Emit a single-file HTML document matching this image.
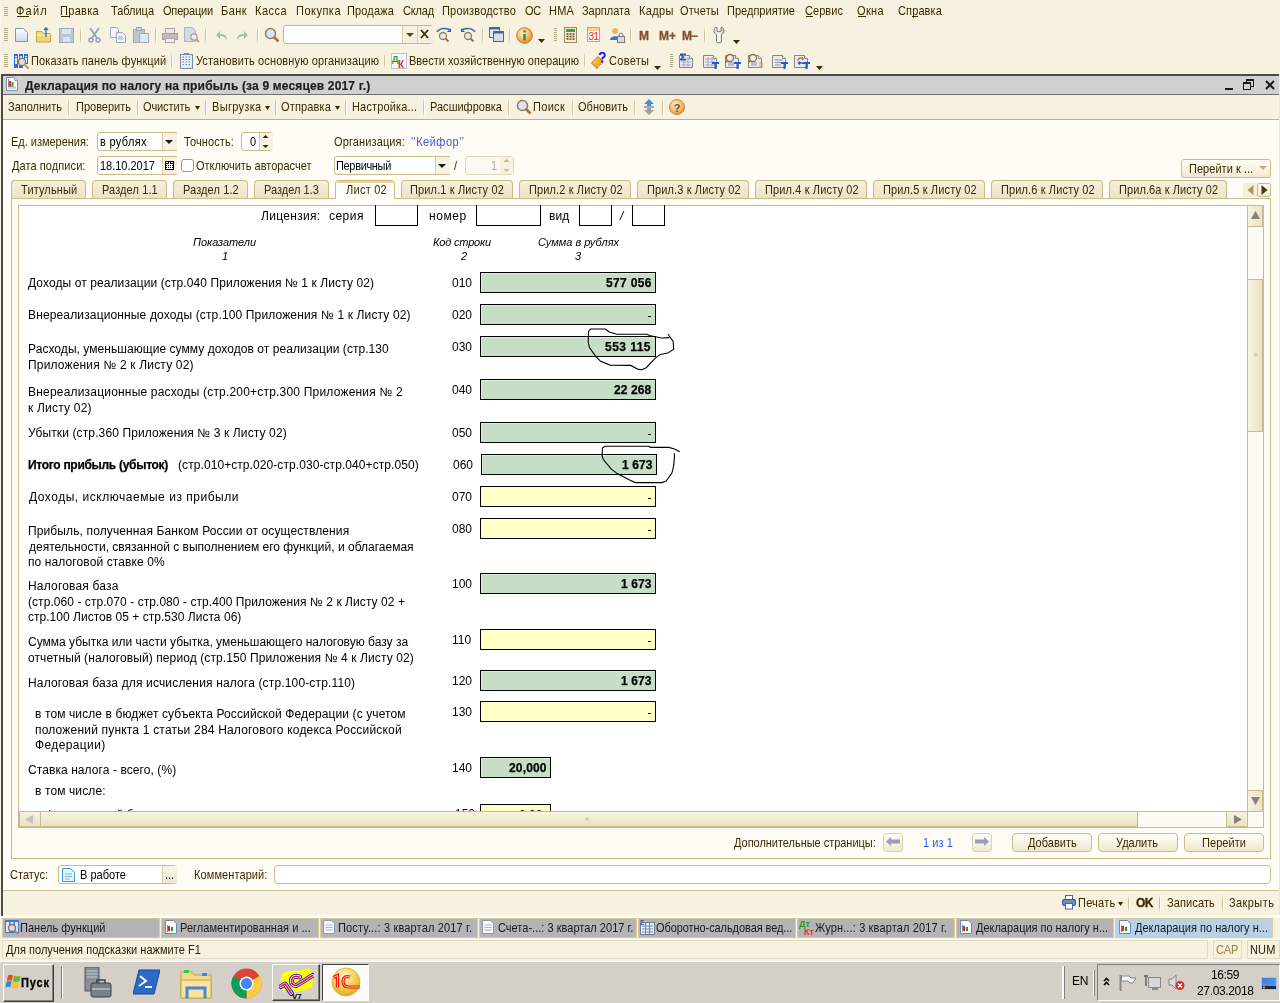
<!DOCTYPE html>
<html><head><meta charset="utf-8"><style>
html,body{margin:0;padding:0;width:1280px;height:1003px;overflow:hidden;background:#f7f2df}
body{position:relative;font-family:"Liberation Sans",sans-serif;color:#3a2b00}
.r{position:absolute;display:block}
.t{position:absolute;white-space:nowrap;will-change:transform}
</style></head><body>
<div class="r" style="left:0px;top:0px;width:1280px;height:74px;background:#f7f2df"></div>
<div class="r" style="left:0px;top:0px;width:1px;height:74px;background:#fbf8ee"></div>
<div class="r" style="left:4px;top:7px;width:4px;height:1px;background:#b3ab88"></div>
<div class="r" style="left:4px;top:9px;width:4px;height:1px;background:#b3ab88"></div>
<div class="r" style="left:4px;top:11px;width:4px;height:1px;background:#b3ab88"></div>
<div class="r" style="left:4px;top:13px;width:4px;height:1px;background:#b3ab88"></div>
<div class="r" style="left:4px;top:15px;width:4px;height:1px;background:#b3ab88"></div>
<div class="t" style="left:16.00px;top:6px;font-size:11px;line-height:11px;letter-spacing:1.206px;transform:scaleY(1.125);transform-origin:0 9px;">Файл</div>
<div class="t" style="left:60.00px;top:6px;font-size:11px;line-height:11px;letter-spacing:0.307px;transform:scaleY(1.125);transform-origin:0 9px;">Правка</div>
<div class="t" style="left:111.00px;top:6px;font-size:11px;line-height:11px;letter-spacing:-0.019px;transform:scaleY(1.125);transform-origin:0 9px;">Таблица</div>
<div class="t" style="left:163.00px;top:6px;font-size:11px;line-height:11px;letter-spacing:-0.182px;transform:scaleY(1.125);transform-origin:0 9px;">Операции</div>
<div class="t" style="left:221.00px;top:6px;font-size:11px;line-height:11px;letter-spacing:0.444px;transform:scaleY(1.125);transform-origin:0 9px;">Банк</div>
<div class="t" style="left:255.00px;top:6px;font-size:11px;line-height:11px;letter-spacing:0.472px;transform:scaleY(1.125);transform-origin:0 9px;">Касса</div>
<div class="t" style="left:296.00px;top:6px;font-size:11px;line-height:11px;letter-spacing:0.487px;transform:scaleY(1.125);transform-origin:0 9px;">Покупка</div>
<div class="t" style="left:347.00px;top:6px;font-size:11px;line-height:11px;letter-spacing:0.156px;transform:scaleY(1.125);transform-origin:0 9px;">Продажа</div>
<div class="t" style="left:403.00px;top:6px;font-size:11px;line-height:11px;letter-spacing:-0.167px;transform:scaleY(1.125);transform-origin:0 9px;">Склад</div>
<div class="t" style="left:442.00px;top:6px;font-size:11px;line-height:11px;letter-spacing:0.190px;transform:scaleY(1.125);transform-origin:0 9px;">Производство</div>
<div class="t" style="left:524.50px;top:6px;font-size:11px;line-height:11px;letter-spacing:-0.250px;transform:scaleY(1.125);transform-origin:0 9px;">ОС</div>
<div class="t" style="left:548.50px;top:6px;font-size:11px;line-height:11px;letter-spacing:0.185px;transform:scaleY(1.125);transform-origin:0 9px;">НМА</div>
<div class="t" style="left:582.00px;top:6px;font-size:11px;line-height:11px;letter-spacing:-0.020px;transform:scaleY(1.125);transform-origin:0 9px;">Зарплата</div>
<div class="t" style="left:639.00px;top:6px;font-size:11px;line-height:11px;letter-spacing:0.382px;transform:scaleY(1.125);transform-origin:0 9px;">Кадры</div>
<div class="t" style="left:680.00px;top:6px;font-size:11px;line-height:11px;letter-spacing:0.137px;transform:scaleY(1.125);transform-origin:0 9px;">Отчеты</div>
<div class="t" style="left:726.50px;top:6px;font-size:11px;line-height:11px;letter-spacing:0.019px;transform:scaleY(1.125);transform-origin:0 9px;">Предприятие</div>
<div class="t" style="left:805.00px;top:6px;font-size:11px;line-height:11px;letter-spacing:0.056px;transform:scaleY(1.125);transform-origin:0 9px;">Сервис</div>
<div class="t" style="left:857.00px;top:6px;font-size:11px;line-height:11px;letter-spacing:0.360px;transform:scaleY(1.125);transform-origin:0 9px;">Окна</div>
<div class="t" style="left:898.00px;top:6px;font-size:11px;line-height:11px;letter-spacing:0.121px;transform:scaleY(1.125);transform-origin:0 9px;">Справка</div>
<div class="r" style="left:17px;top:16px;width:12px;height:1px;background:#3a2b00"></div>
<div class="r" style="left:61px;top:16px;width:8px;height:1px;background:#3a2b00"></div>
<div class="r" style="left:806px;top:16px;width:7px;height:1px;background:#3a2b00"></div>
<div class="r" style="left:858px;top:16px;width:8px;height:1px;background:#3a2b00"></div>
<div class="r" style="left:912px;top:16px;width:6px;height:1px;background:#3a2b00"></div>
<div class="r" style="left:4px;top:28px;width:4px;height:1px;background:#b3ab88"></div>
<div class="r" style="left:4px;top:30px;width:4px;height:1px;background:#b3ab88"></div>
<div class="r" style="left:4px;top:32px;width:4px;height:1px;background:#b3ab88"></div>
<div class="r" style="left:4px;top:34px;width:4px;height:1px;background:#b3ab88"></div>
<div class="r" style="left:4px;top:36px;width:4px;height:1px;background:#b3ab88"></div>
<div class="r" style="left:4px;top:38px;width:4px;height:1px;background:#b3ab88"></div>
<div class="r" style="left:4px;top:40px;width:4px;height:1px;background:#b3ab88"></div>
<svg class="r" style="left:15px;top:28px;" width="13" height="14" viewBox="0 0 13 14"><defs><linearGradient id="gd" x1="0" y1="0" x2="0" y2="1"><stop offset="0" stop-color="#fff"/><stop offset="1" stop-color="#c9d9f0"/></linearGradient></defs><path d="M0.5 0.5H8.5L12.5 4.5V13.5H0.5Z" fill="url(#gd)" stroke="#7d93b0"/></svg>
<svg class="r" style="left:36px;top:27px;" width="16" height="16" viewBox="0 0 16 16"><path d="M0.5 4.5H6L7.5 6.5H14.5V15H0.5Z" fill="#f2d77a" stroke="#c9a24a"/><path d="M0.5 8H14.5" stroke="#fff3c0"/><path d="M10 1V10M8 3L10 1L12 3" stroke="#3a6a98" fill="none" stroke-width="1.3"/></svg>
<svg class="r" style="left:59px;top:28px;" width="15" height="15" viewBox="0 0 15 15"><rect x="0.5" y="0.5" width="14" height="14" fill="#b9c7d8" stroke="#9aabbf"/><rect x="3" y="1" width="9" height="5" fill="#dde6ef"/><rect x="4" y="9" width="7" height="5" fill="#dde6ef"/></svg>
<div class="r" style="left:80px;top:27px;width:1px;height:17px;background:linear-gradient(to bottom, rgba(205,191,152,0), #cdbf98 30%, #cdbf98 70%, rgba(205,191,152,0))"></div>
<div class="r" style="left:81px;top:27px;width:1px;height:17px;background:linear-gradient(to bottom, rgba(255,255,255,0), #fff 30%, #fff 70%, rgba(255,255,255,0))"></div>
<svg class="r" style="left:88px;top:27px;" width="13" height="16" viewBox="0 0 13 16"><path d="M2 1L9 11M11 1L4 11" stroke="#8fa2ba" stroke-width="1.8"/><circle cx="3" cy="13" r="2" fill="none" stroke="#8fa2ba" stroke-width="1.5"/><circle cx="10" cy="13" r="2" fill="none" stroke="#8fa2ba" stroke-width="1.5"/></svg>
<svg class="r" style="left:110px;top:27px;" width="16" height="16" viewBox="0 0 16 16"><path d="M0.5 0.5H6.5L8.5 2.5V10.5H0.5Z" fill="#f2f5fa" stroke="#9aabbf"/><path d="M6.5 5.5H12.5L15.5 8.5V15.5H6.5Z" fill="#f2f5fa" stroke="#9aabbf"/><path d="M8 10H13M8 12H13" stroke="#9aabbf"/></svg>
<svg class="r" style="left:133px;top:27px;" width="16" height="16" viewBox="0 0 16 16"><rect x="0.5" y="2.5" width="11" height="13" fill="#b8c6d6" stroke="#9aabbf"/><rect x="3.5" y="0.5" width="5" height="3" fill="#ccd6e2" stroke="#9aabbf"/><rect x="6.5" y="6.5" width="9" height="9" fill="#dfe6ee" stroke="#9aabbf"/></svg>
<div class="r" style="left:155px;top:27px;width:1px;height:17px;background:linear-gradient(to bottom, rgba(205,191,152,0), #cdbf98 30%, #cdbf98 70%, rgba(205,191,152,0))"></div>
<div class="r" style="left:156px;top:27px;width:1px;height:17px;background:linear-gradient(to bottom, rgba(255,255,255,0), #fff 30%, #fff 70%, rgba(255,255,255,0))"></div>
<svg class="r" style="left:162px;top:28px;" width="16" height="15" viewBox="0 0 16 15"><rect x="3.5" y="0.5" width="9" height="5" fill="#e8e8e8" stroke="#b0a8a8"/><rect x="0.5" y="5.5" width="15" height="6" fill="#c4b8b8" stroke="#aa9e9e"/><rect x="3.5" y="10.5" width="9" height="4" fill="#eee" stroke="#b0a8a8"/></svg>
<svg class="r" style="left:184px;top:27px;" width="16" height="16" viewBox="0 0 16 16"><path d="M0.5 0.5H8.5L11.5 3.5V14.5H0.5Z" fill="#d2dbe6" stroke="#a8b6c6"/><circle cx="10" cy="10" r="3.2" fill="#e6eef6" stroke="#b89a90" stroke-width="1.3"/><path d="M12.3 12.3L15 15" stroke="#b89a90" stroke-width="1.8"/></svg>
<div class="r" style="left:205px;top:27px;width:1px;height:17px;background:linear-gradient(to bottom, rgba(205,191,152,0), #cdbf98 30%, #cdbf98 70%, rgba(205,191,152,0))"></div>
<div class="r" style="left:206px;top:27px;width:1px;height:17px;background:linear-gradient(to bottom, rgba(255,255,255,0), #fff 30%, #fff 70%, rgba(255,255,255,0))"></div>
<svg class="r" style="left:216px;top:30px;" width="12" height="11" viewBox="0 0 12 11"><path d="M11 10C11 5 8 4 4 4V1L0 5L4 9V6C7 6 9 7 11 10Z" fill="#a8baa8"/></svg>
<svg class="r" style="left:236px;top:30px;" width="12" height="11" viewBox="0 0 12 11"><path d="M1 10C1 5 4 4 8 4V1L12 5L8 9V6C5 6 3 7 1 10Z" fill="#a8baa8"/></svg>
<div class="r" style="left:257px;top:27px;width:1px;height:17px;background:linear-gradient(to bottom, rgba(205,191,152,0), #cdbf98 30%, #cdbf98 70%, rgba(205,191,152,0))"></div>
<div class="r" style="left:258px;top:27px;width:1px;height:17px;background:linear-gradient(to bottom, rgba(255,255,255,0), #fff 30%, #fff 70%, rgba(255,255,255,0))"></div>
<svg class="r" style="left:264px;top:27px;" width="16" height="16" viewBox="0 0 16 16"><circle cx="6.5" cy="6.5" r="5" fill="#d9e8f8" stroke="#9a7a5a" stroke-width="1.5"/><path d="M10 10L14.5 14.5" stroke="#b56a3a" stroke-width="2.5"/></svg>
<div class="r" style="left:283px;top:25px;width:150px;height:19px;background:#fff;border:1px solid #c5b98f;border-radius:3px;box-sizing:border-box"></div>
<div class="r" style="left:402px;top:26px;width:15px;height:17px;background:#f5f0de;border-left:1px solid #d8ceaa"></div>
<div class="r" style="left:417px;top:26px;width:15px;height:17px;background:#f5f0de;border-left:1px solid #d8ceaa;border-radius:0 2px 2px 0"></div>
<svg class="r" style="left:406px;top:33px;" width="8" height="4" viewBox="0 0 8 4"><path d="M0 0H8L4.0 4Z" fill="#5a4a1a"/></svg>
<svg class="r" style="left:420px;top:29px;" width="9" height="10" viewBox="0 0 9 10"><path d="M1 1L8 9M8 1L1 9" stroke="#3a2b00" stroke-width="1.8"/></svg>
<svg class="r" style="left:436px;top:27px;" width="16" height="16" viewBox="0 0 16 16"><path d="M1 5C3 1 12 0 15 4" stroke="#3a6aa8" stroke-width="1.5" fill="none"/><path d="M15 1V5H11" fill="#3a6aa8"/><circle cx="7" cy="9" r="3.5" fill="#dde9f6" stroke="#9a7a5a" stroke-width="1.3"/><path d="M9.5 11.5L12.5 14.5" stroke="#b56a3a" stroke-width="2"/></svg>
<svg class="r" style="left:460px;top:27px;" width="16" height="16" viewBox="0 0 16 16"><path d="M1 4C4 0 13 1 15 5" stroke="#3a6aa8" stroke-width="1.5" fill="none"/><path d="M1 1V5H5" fill="#3a6aa8"/><circle cx="8" cy="9" r="3.5" fill="#dde9f6" stroke="#9a7a5a" stroke-width="1.3"/><path d="M10.5 11.5L13.5 14.5" stroke="#b56a3a" stroke-width="2"/></svg>
<div class="r" style="left:482px;top:27px;width:1px;height:17px;background:linear-gradient(to bottom, rgba(205,191,152,0), #cdbf98 30%, #cdbf98 70%, rgba(205,191,152,0))"></div>
<div class="r" style="left:483px;top:27px;width:1px;height:17px;background:linear-gradient(to bottom, rgba(255,255,255,0), #fff 30%, #fff 70%, rgba(255,255,255,0))"></div>
<svg class="r" style="left:489px;top:27px;" width="15" height="16" viewBox="0 0 15 16"><rect x="0.5" y="0.5" width="10" height="10" fill="#e4ecf6" stroke="#4a6a90"/><rect x="0.5" y="0.5" width="10" height="2" fill="#4a6a90"/><rect x="4.5" y="4.5" width="10" height="10" fill="#d4e0ee" stroke="#4a6a90"/><rect x="4.5" y="4.5" width="10" height="2" fill="#4a6a90"/></svg>
<div class="r" style="left:509px;top:27px;width:1px;height:17px;background:linear-gradient(to bottom, rgba(205,191,152,0), #cdbf98 30%, #cdbf98 70%, rgba(205,191,152,0))"></div>
<div class="r" style="left:510px;top:27px;width:1px;height:17px;background:linear-gradient(to bottom, rgba(255,255,255,0), #fff 30%, #fff 70%, rgba(255,255,255,0))"></div>
<svg class="r" style="left:516px;top:27px;" width="17" height="17" viewBox="0 0 17 17"><defs><radialGradient id="gi" cx="0.4" cy="0.35" r="0.7"><stop offset="0" stop-color="#fff4d8"/><stop offset="0.6" stop-color="#f5b45a"/><stop offset="1" stop-color="#d98a2a"/></radialGradient></defs><circle cx="8.5" cy="8.5" r="7.8" fill="url(#gi)" stroke="#c07a30"/><rect x="7.3" y="7" width="2.4" height="6.5" fill="#3d8a2a"/><circle cx="8.5" cy="4.5" r="1.3" fill="#3d8a2a"/></svg>
<svg class="r" style="left:538px;top:39px;" width="7" height="4" viewBox="0 0 7 4"><path d="M0 0H7L3.5 4Z" fill="#3a2b00"/></svg>
<div class="r" style="left:554px;top:28px;width:3px;height:1px;background:#b3ab88"></div>
<div class="r" style="left:554px;top:30px;width:3px;height:1px;background:#b3ab88"></div>
<div class="r" style="left:554px;top:32px;width:3px;height:1px;background:#b3ab88"></div>
<div class="r" style="left:554px;top:34px;width:3px;height:1px;background:#b3ab88"></div>
<div class="r" style="left:554px;top:36px;width:3px;height:1px;background:#b3ab88"></div>
<div class="r" style="left:554px;top:38px;width:3px;height:1px;background:#b3ab88"></div>
<div class="r" style="left:554px;top:40px;width:3px;height:1px;background:#b3ab88"></div>
<svg class="r" style="left:564px;top:27px;" width="13" height="16" viewBox="0 0 13 16"><rect x="0.5" y="0.5" width="12" height="15" fill="#f4ead0" stroke="#a08a60"/><rect x="2" y="2" width="9" height="3" fill="#4a9a4a"/><path d="M2.5 7H4.5M5.5 7H7.5M8.5 7H10.5M2.5 9.5H4.5M5.5 9.5H7.5M8.5 9.5H10.5M2.5 12H4.5M5.5 12H7.5M8.5 12H10.5" stroke="#5a4a30" stroke-width="1.4"/></svg>
<svg class="r" style="left:587px;top:27px;" width="13" height="15" viewBox="0 0 13 15"><rect x="0.5" y="0.5" width="12" height="14" fill="#fdf8f0" stroke="#a8a8b0"/><rect x="1" y="1" width="11" height="3" fill="#f6c890"/><path d="M2.5 2H3.5M5 2H6M7.5 2H8.5M10 2H11" stroke="#fff"/><text x="6.5" y="13" font-size="10" text-anchor="middle" fill="#e8281c" font-family="Liberation Sans" letter-spacing="-0.5">31</text></svg>
<svg class="r" style="left:610px;top:27px;" width="15" height="16" viewBox="0 0 15 16"><circle cx="5" cy="4" r="3" fill="#f2b060"/><path d="M0 13C0 8 10 8 10 13Z" fill="#3a78c8"/><rect x="7.5" y="9.5" width="7" height="6" fill="#d8d8d8" stroke="#7a7a7a"/><path d="M9 9.5V8A2 2 0 0 1 13 8V9.5" stroke="#7a7a7a" fill="none"/></svg>
<div class="r" style="left:630px;top:27px;width:1px;height:17px;background:linear-gradient(to bottom, rgba(205,191,152,0), #cdbf98 30%, #cdbf98 70%, rgba(205,191,152,0))"></div>
<div class="r" style="left:631px;top:27px;width:1px;height:17px;background:linear-gradient(to bottom, rgba(255,255,255,0), #fff 30%, #fff 70%, rgba(255,255,255,0))"></div>
<div class="t" style="left:639.00px;top:30px;font-size:12px;line-height:12px;font-weight:bold;color:#80502a;-webkit-text-stroke:0.3px #80502a;">M</div>
<div class="t" style="left:659.00px;top:30px;font-size:12px;line-height:12px;font-weight:bold;color:#80502a;letter-spacing:-0.002px;-webkit-text-stroke:0.3px #80502a;">M+</div>
<div class="t" style="left:682.00px;top:30px;font-size:12px;line-height:12px;font-weight:bold;color:#80502a;letter-spacing:-1.202px;-webkit-text-stroke:0.3px #80502a;">M−</div>
<div class="r" style="left:704px;top:27px;width:1px;height:17px;background:linear-gradient(to bottom, rgba(205,191,152,0), #cdbf98 30%, #cdbf98 70%, rgba(205,191,152,0))"></div>
<div class="r" style="left:705px;top:27px;width:1px;height:17px;background:linear-gradient(to bottom, rgba(255,255,255,0), #fff 30%, #fff 70%, rgba(255,255,255,0))"></div>
<svg class="r" style="left:713px;top:26px;" width="12" height="18" viewBox="0 0 12 18"><defs><linearGradient id="gw" x1="0" y1="0" x2="1" y2="0"><stop offset="0" stop-color="#d8d8d8"/><stop offset="0.5" stop-color="#fafafa"/><stop offset="1" stop-color="#b8b8b8"/></linearGradient></defs><path d="M2.5 1.5C0.5 3 0.5 6.5 2.5 8L3.5 8.8V15.5Q3.5 16.8 6 16.8Q8.5 16.8 8.5 15.5V8.8L9.5 8C11.5 6.5 11.5 3 9.5 1.5L8 1.5V5.2Q6 6.5 4 5.2V1.5Z" fill="url(#gw)" stroke="#7a7a7a"/></svg>
<svg class="r" style="left:733px;top:40px;" width="7" height="4" viewBox="0 0 7 4"><path d="M0 0H7L3.5 4Z" fill="#3a2a00"/></svg>
<div class="r" style="left:4px;top:54px;width:4px;height:1px;background:#b3ab88"></div>
<div class="r" style="left:4px;top:56px;width:4px;height:1px;background:#b3ab88"></div>
<div class="r" style="left:4px;top:58px;width:4px;height:1px;background:#b3ab88"></div>
<div class="r" style="left:4px;top:60px;width:4px;height:1px;background:#b3ab88"></div>
<div class="r" style="left:4px;top:62px;width:4px;height:1px;background:#b3ab88"></div>
<div class="r" style="left:4px;top:64px;width:4px;height:1px;background:#b3ab88"></div>
<div class="r" style="left:4px;top:66px;width:4px;height:1px;background:#b3ab88"></div>
<svg class="r" style="left:14px;top:54px;" width="16" height="16" viewBox="0 0 16 16"><rect x="0" y="0" width="4" height="14" fill="#2a6ae8"/><rect x="1" y="2" width="2" height="8" fill="#d8f0ff"/><rect x="1" y="3" width="2" height="1" fill="#e07040"/><rect x="5" y="0" width="4" height="14" fill="#2a6ae8"/><rect x="6" y="2" width="2" height="10" fill="#d8f0ff"/><rect x="10" y="0" width="4" height="10" fill="#2a6ae8"/><rect x="11" y="2" width="2" height="7" fill="#d8f0ff"/><rect x="11" y="3" width="2" height="1" fill="#e07040"/><circle cx="8" cy="8" r="3.6" fill="#c8e4fa" stroke="#b07020" stroke-width="1.3"/><path d="M10.6 10.6L14.5 14.5" stroke="#e88a30" stroke-width="2"/></svg>
<div class="t" style="left:30.50px;top:56px;font-size:11px;line-height:11px;letter-spacing:0.105px;transform:scaleY(1.125);transform-origin:0 9px;">Показать панель функций</div>
<div class="r" style="left:171px;top:53px;width:1px;height:16px;background:linear-gradient(to bottom, rgba(205,191,152,0), #cdbf98 30%, #cdbf98 70%, rgba(205,191,152,0))"></div>
<div class="r" style="left:172px;top:53px;width:1px;height:16px;background:linear-gradient(to bottom, rgba(255,255,255,0), #fff 30%, #fff 70%, rgba(255,255,255,0))"></div>
<svg class="r" style="left:180px;top:53px;" width="13" height="16" viewBox="0 0 13 16"><rect x="0.5" y="1.5" width="12" height="14" fill="#e8eef8" stroke="#7a8aa8"/><rect x="4" y="0" width="5" height="2" fill="#7a8aa8"/><path d="M2.5 4H4M5.5 4H7M8.5 4H10M2.5 6.5H4M5.5 6.5H7M8.5 6.5H10M2.5 9H4M5.5 9H7M8.5 9H10M2.5 11.5H4M5.5 11.5H7M8.5 11.5H10" stroke="#6a8ac8"/></svg>
<div class="t" style="left:195.50px;top:56px;font-size:11px;line-height:11px;letter-spacing:0.118px;transform:scaleY(1.125);transform-origin:0 9px;">Установить основную организацию</div>
<div class="r" style="left:384px;top:53px;width:1px;height:16px;background:linear-gradient(to bottom, rgba(205,191,152,0), #cdbf98 30%, #cdbf98 70%, rgba(205,191,152,0))"></div>
<div class="r" style="left:385px;top:53px;width:1px;height:16px;background:linear-gradient(to bottom, rgba(255,255,255,0), #fff 30%, #fff 70%, rgba(255,255,255,0))"></div>
<svg class="r" style="left:391px;top:53px;" width="16" height="16" viewBox="0 0 16 16"><rect x="0.5" y="0.5" width="15" height="15" fill="#f6f8fb" stroke="#b8c4d4"/><text x="1" y="9" font-size="9" font-weight="bold" fill="#2a9a2a" font-family="Liberation Sans">Д</text><text x="7" y="15" font-size="10" font-weight="bold" fill="#e03030" font-family="Liberation Sans">К</text></svg>
<div class="t" style="left:408.50px;top:56px;font-size:11px;line-height:11px;letter-spacing:0.004px;transform:scaleY(1.125);transform-origin:0 9px;">Ввести хозяйственную операцию</div>
<div class="r" style="left:584px;top:53px;width:1px;height:16px;background:linear-gradient(to bottom, rgba(205,191,152,0), #cdbf98 30%, #cdbf98 70%, rgba(205,191,152,0))"></div>
<div class="r" style="left:585px;top:53px;width:1px;height:16px;background:linear-gradient(to bottom, rgba(255,255,255,0), #fff 30%, #fff 70%, rgba(255,255,255,0))"></div>
<svg class="r" style="left:591px;top:52px;" width="18" height="17" viewBox="0 0 18 17"><defs><linearGradient id="gb" x1="0" y1="0" x2="1" y2="1"><stop offset="0" stop-color="#ffe840"/><stop offset="1" stop-color="#f07020"/></linearGradient></defs><path d="M0.5 11L7 4.5L12.5 10L6 16.5Z" fill="url(#gb)" stroke="#b04a10" stroke-width="0.8"/><path d="M7.5 15L12.5 10" stroke="#fff" stroke-width="1.2" stroke-dasharray="1 1"/><path d="M8.5 3.2Q8.8 0.8 11.2 0.8Q13.8 0.8 13.8 3.2Q13.8 4.8 12 5.6Q11.2 6 11.2 7.5" fill="none" stroke="#1a28f0" stroke-width="2"/><rect x="10.2" y="8.6" width="2" height="2" fill="#1a28f0"/></svg>
<div class="t" style="left:608.50px;top:56px;font-size:11px;line-height:11px;letter-spacing:0.310px;transform:scaleY(1.125);transform-origin:0 9px;">Советы</div>
<svg class="r" style="left:654px;top:66px;" width="7" height="4" viewBox="0 0 7 4"><path d="M0 0H7L3.5 4Z" fill="#3a2b00"/></svg>
<div class="r" style="left:670px;top:54px;width:3px;height:1px;background:#b3ab88"></div>
<div class="r" style="left:670px;top:56px;width:3px;height:1px;background:#b3ab88"></div>
<div class="r" style="left:670px;top:58px;width:3px;height:1px;background:#b3ab88"></div>
<div class="r" style="left:670px;top:60px;width:3px;height:1px;background:#b3ab88"></div>
<div class="r" style="left:670px;top:62px;width:3px;height:1px;background:#b3ab88"></div>
<div class="r" style="left:670px;top:64px;width:3px;height:1px;background:#b3ab88"></div>
<div class="r" style="left:670px;top:66px;width:3px;height:1px;background:#b3ab88"></div>
<svg class="r" style="left:679px;top:53px;" width="16" height="16" viewBox="0 0 16 16"><path d="M0.5 2.5H10.5L13.5 5.5V14.5H0.5Z" fill="#ececf0" stroke="#85858d"/><path d="M10.5 2.5V5.5H13.5" fill="#fff" stroke="#85858d"/><path d="M2 6H12M2 9H12M2 12H12M5 4V14M9 4V14" stroke="#a8a8c0"/><path d="M1 0.5H7V2H3.5L5.5 4L3.5 6H7V7.5H1V6L3 4L1 2Z" fill="#2f5fb0"/></svg>
<svg class="r" style="left:703px;top:53px;" width="16" height="16" viewBox="0 0 16 16"><path d="M0.5 2.5H10.5L13.5 5.5V14.5H0.5Z" fill="#ececf0" stroke="#85858d"/><path d="M10.5 2.5V5.5H13.5" fill="#fff" stroke="#85858d"/><path d="M2 6H12M2 9H12M2 12H12M5 4V14M9 4V14" stroke="#a8a8c0"/><path d="M9 9H16V11H13.5V16H11.5V11H9Z" fill="#1f5fbf"/></svg>
<svg class="r" style="left:725px;top:53px;" width="16" height="16" viewBox="0 0 16 16"><path d="M0.5 2.5H10.5L13.5 5.5V14.5H0.5Z" fill="#ececf0" stroke="#85858d"/><path d="M10.5 2.5V5.5H13.5" fill="#fff" stroke="#85858d"/><path d="M3 10H11M3 12H9" stroke="#909098"/><circle cx="5" cy="5" r="3.5" fill="#e8f0f8" stroke="#9a6a40" stroke-width="1.3"/><path d="M2.5 7.5L0.5 9.5" stroke="#9a6a40" stroke-width="1.6"/><path d="M9 9H16V11H13.5V16H11.5V11H9Z" fill="#1f5fbf"/></svg>
<svg class="r" style="left:748px;top:53px;" width="16" height="16" viewBox="0 0 16 16"><path d="M0.5 2.5H10.5L13.5 5.5V14.5H0.5Z" fill="#ececf0" stroke="#85858d"/><path d="M10.5 2.5V5.5H13.5" fill="#fff" stroke="#85858d"/><path d="M3 10H9M3 12H9" stroke="#909098"/><path d="M11 10H15M11 12H15M11 14H15" stroke="#c0a040" stroke-width="1.2"/><circle cx="5" cy="5" r="3.5" fill="#e8f0f8" stroke="#9a6a40" stroke-width="1.3"/><path d="M2.5 7.5L0.5 9.5" stroke="#9a6a40" stroke-width="1.6"/></svg>
<svg class="r" style="left:772px;top:53px;" width="16" height="16" viewBox="0 0 16 16"><path d="M0.5 2.5H10.5L13.5 5.5V14.5H0.5Z" fill="#ececf0" stroke="#85858d"/><path d="M10.5 2.5V5.5H13.5" fill="#fff" stroke="#85858d"/><path d="M3 7H11M3 9.5H11M3 12H9" stroke="#909098"/><path d="M9 9H16V11H13.5V16H11.5V11H9Z" fill="#1f5fbf"/></svg>
<svg class="r" style="left:794px;top:53px;" width="16" height="16" viewBox="0 0 16 16"><path d="M0.5 2.5H10.5L13.5 5.5V14.5H0.5Z" fill="#ececf0" stroke="#85858d"/><path d="M10.5 2.5V5.5H13.5" fill="#fff" stroke="#85858d"/><path d="M3 7Q5 3 8 5L8 3.5L10 6L7.5 7.5L7.8 6Q5.5 5 4 8Z" fill="#c06a30"/><path d="M4 10H9M4 10L6 8.5M4 10L6 11.5" stroke="#2060c0" stroke-width="1.3" fill="none"/><path d="M9 9H16V11H13.5V16H11.5V11H9Z" fill="#1f5fbf"/></svg>
<svg class="r" style="left:816px;top:66px;" width="7" height="4" viewBox="0 0 7 4"><path d="M0 0H7L3.5 4Z" fill="#3a2a00"/></svg>
<div class="r" style="left:1px;top:74px;width:1278px;height:2px;background:#4b4b4b"></div>
<div class="r" style="left:1px;top:74px;width:2px;height:842px;background:#4b4b4b"></div>
<div class="r" style="left:1279px;top:74px;width:1px;height:842px;background:#e6e6e6"></div>
<div class="r" style="left:3px;top:76px;width:1276px;height:18px;background:#d0d0d0"></div>
<div class="r" style="left:3px;top:94px;width:1276px;height:1px;background:#707070"></div>
<svg class="r" style="left:6px;top:77px;" width="12" height="14" viewBox="0 0 12 14"><path d="M0.5 0.5H8.5L11.5 3.5V13.5H0.5Z" fill="#fff" stroke="#7a94b0"/><path d="M8.5 0.5V3.5H11.5" fill="#dde6f0" stroke="#9ab0c8"/><rect x="2" y="2" width="1" height="8" fill="#9a8a8a"/><rect x="3" y="4" width="2" height="6" fill="#f02818"/><rect x="5.5" y="5" width="2" height="5" fill="#30a018"/><rect x="2" y="9.5" width="8" height="1" fill="#a0a0b0"/><rect x="2" y="11" width="8" height="1" fill="#c8dcf0"/></svg>
<div class="t" style="left:25.00px;top:80px;font-size:12px;line-height:12px;font-weight:bold;color:#1e1e1e;letter-spacing:0.162px;-webkit-text-stroke:0.2px #1e1e1e;">Декларация по налогу на прибыль (за 9 месяцев 2017 г.)</div>
<div class="r" style="left:1225px;top:88px;width:8px;height:2px;background:#1a1a1a"></div>
<svg class="r" style="left:1243px;top:79px;" width="11" height="11" viewBox="0 0 11 11"><rect x="3.5" y="0.5" width="7" height="7" fill="none" stroke="#1a1a1a"/><rect x="3" y="0" width="8" height="2" fill="#1a1a1a"/><rect x="0.5" y="3.5" width="7" height="7" fill="#d0d0d0" stroke="#1a1a1a"/><rect x="0" y="3" width="8" height="2" fill="#1a1a1a"/></svg>
<svg class="r" style="left:1265px;top:80px;" width="10" height="10" viewBox="0 0 10 10"><path d="M1 1L9 9M9 1L1 9" stroke="#1a1a1a" stroke-width="2"/></svg>
<div class="r" style="left:3px;top:95px;width:1276px;height:24px;background:#f7f2df"></div>
<div class="r" style="left:3px;top:119px;width:1276px;height:1px;background:#bdb08a"></div>
<div class="t" style="left:7.75px;top:102px;font-size:11px;line-height:11px;transform:scaleY(1.125);transform-origin:0 9px;">Заполнить</div>
<div class="t" style="left:75.50px;top:102px;font-size:11px;line-height:11px;transform:scaleY(1.125);transform-origin:0 9px;">Проверить</div>
<div class="t" style="left:143.00px;top:102px;font-size:11px;line-height:11px;letter-spacing:-0.110px;transform:scaleY(1.125);transform-origin:0 9px;">Очистить</div>
<div class="t" style="left:211.50px;top:102px;font-size:11px;line-height:11px;letter-spacing:0.317px;transform:scaleY(1.125);transform-origin:0 9px;">Выгрузка</div>
<div class="t" style="left:281.00px;top:102px;font-size:11px;line-height:11px;letter-spacing:0.150px;transform:scaleY(1.125);transform-origin:0 9px;">Отправка</div>
<div class="t" style="left:352.00px;top:102px;font-size:11px;line-height:11px;letter-spacing:0.158px;transform:scaleY(1.125);transform-origin:0 9px;">Настройка...</div>
<div class="t" style="left:430.00px;top:102px;font-size:11px;line-height:11px;letter-spacing:0.013px;transform:scaleY(1.125);transform-origin:0 9px;">Расшифровка</div>
<div class="t" style="left:532.50px;top:102px;font-size:11px;line-height:11px;letter-spacing:0.304px;transform:scaleY(1.125);transform-origin:0 9px;">Поиск</div>
<div class="t" style="left:578.00px;top:102px;font-size:11px;line-height:11px;letter-spacing:0.024px;transform:scaleY(1.125);transform-origin:0 9px;">Обновить</div>
<svg class="r" style="left:195px;top:106px;" width="5" height="4" viewBox="0 0 5 4"><path d="M0 0H5L2.5 4Z" fill="#3a2b00"/></svg>
<svg class="r" style="left:265px;top:106px;" width="5" height="4" viewBox="0 0 5 4"><path d="M0 0H5L2.5 4Z" fill="#3a2b00"/></svg>
<svg class="r" style="left:335px;top:106px;" width="5" height="4" viewBox="0 0 5 4"><path d="M0 0H5L2.5 4Z" fill="#3a2b00"/></svg>
<div class="r" style="left:68px;top:98px;width:1px;height:19px;background:linear-gradient(to bottom, rgba(205,191,152,0), #cdbf98 30%, #cdbf98 70%, rgba(205,191,152,0))"></div>
<div class="r" style="left:69px;top:98px;width:1px;height:19px;background:linear-gradient(to bottom, rgba(255,255,255,0), #fff 30%, #fff 70%, rgba(255,255,255,0))"></div>
<div class="r" style="left:137px;top:98px;width:1px;height:19px;background:linear-gradient(to bottom, rgba(205,191,152,0), #cdbf98 30%, #cdbf98 70%, rgba(205,191,152,0))"></div>
<div class="r" style="left:138px;top:98px;width:1px;height:19px;background:linear-gradient(to bottom, rgba(255,255,255,0), #fff 30%, #fff 70%, rgba(255,255,255,0))"></div>
<div class="r" style="left:205px;top:98px;width:1px;height:19px;background:linear-gradient(to bottom, rgba(205,191,152,0), #cdbf98 30%, #cdbf98 70%, rgba(205,191,152,0))"></div>
<div class="r" style="left:206px;top:98px;width:1px;height:19px;background:linear-gradient(to bottom, rgba(255,255,255,0), #fff 30%, #fff 70%, rgba(255,255,255,0))"></div>
<div class="r" style="left:275px;top:98px;width:1px;height:19px;background:linear-gradient(to bottom, rgba(205,191,152,0), #cdbf98 30%, #cdbf98 70%, rgba(205,191,152,0))"></div>
<div class="r" style="left:276px;top:98px;width:1px;height:19px;background:linear-gradient(to bottom, rgba(255,255,255,0), #fff 30%, #fff 70%, rgba(255,255,255,0))"></div>
<div class="r" style="left:345px;top:98px;width:1px;height:19px;background:linear-gradient(to bottom, rgba(205,191,152,0), #cdbf98 30%, #cdbf98 70%, rgba(205,191,152,0))"></div>
<div class="r" style="left:346px;top:98px;width:1px;height:19px;background:linear-gradient(to bottom, rgba(255,255,255,0), #fff 30%, #fff 70%, rgba(255,255,255,0))"></div>
<div class="r" style="left:423px;top:98px;width:1px;height:19px;background:linear-gradient(to bottom, rgba(205,191,152,0), #cdbf98 30%, #cdbf98 70%, rgba(205,191,152,0))"></div>
<div class="r" style="left:424px;top:98px;width:1px;height:19px;background:linear-gradient(to bottom, rgba(255,255,255,0), #fff 30%, #fff 70%, rgba(255,255,255,0))"></div>
<div class="r" style="left:508px;top:98px;width:1px;height:19px;background:linear-gradient(to bottom, rgba(205,191,152,0), #cdbf98 30%, #cdbf98 70%, rgba(205,191,152,0))"></div>
<div class="r" style="left:509px;top:98px;width:1px;height:19px;background:linear-gradient(to bottom, rgba(255,255,255,0), #fff 30%, #fff 70%, rgba(255,255,255,0))"></div>
<div class="r" style="left:572px;top:98px;width:1px;height:19px;background:linear-gradient(to bottom, rgba(205,191,152,0), #cdbf98 30%, #cdbf98 70%, rgba(205,191,152,0))"></div>
<div class="r" style="left:573px;top:98px;width:1px;height:19px;background:linear-gradient(to bottom, rgba(255,255,255,0), #fff 30%, #fff 70%, rgba(255,255,255,0))"></div>
<div class="r" style="left:634px;top:98px;width:1px;height:19px;background:linear-gradient(to bottom, rgba(205,191,152,0), #cdbf98 30%, #cdbf98 70%, rgba(205,191,152,0))"></div>
<div class="r" style="left:635px;top:98px;width:1px;height:19px;background:linear-gradient(to bottom, rgba(255,255,255,0), #fff 30%, #fff 70%, rgba(255,255,255,0))"></div>
<div class="r" style="left:662px;top:98px;width:1px;height:19px;background:linear-gradient(to bottom, rgba(205,191,152,0), #cdbf98 30%, #cdbf98 70%, rgba(205,191,152,0))"></div>
<div class="r" style="left:663px;top:98px;width:1px;height:19px;background:linear-gradient(to bottom, rgba(255,255,255,0), #fff 30%, #fff 70%, rgba(255,255,255,0))"></div>
<svg class="r" style="left:516px;top:99px;" width="16" height="16" viewBox="0 0 16 16"><circle cx="6.5" cy="6.5" r="5" fill="#d9e8f8" stroke="#9a7a5a" stroke-width="1.5"/><path d="M10 10L14.5 14.5" stroke="#b56a3a" stroke-width="2.5"/></svg>
<svg class="r" style="left:643px;top:98px;" width="12" height="18" viewBox="0 0 12 18"><path d="M6 1L11 6H8V8H4V6H1Z" fill="#4a8ae0"/><path d="M1 9H11" stroke="#3a6ab0"/><path d="M6 17L11 12H8V10H4V12H1Z" fill="#a0a0a0"/></svg>
<svg class="r" style="left:669px;top:99px;" width="16" height="16" viewBox="0 0 16 16"><defs><radialGradient id="gh" cx="0.4" cy="0.35" r="0.7"><stop offset="0" stop-color="#fff0d0"/><stop offset="0.7" stop-color="#f3b05a"/><stop offset="1" stop-color="#d88a30"/></radialGradient></defs><circle cx="8" cy="8" r="7.5" fill="url(#gh)" stroke="#c88a40"/><text x="8" y="12.5" font-size="11" text-anchor="middle" fill="#7a4a20" font-weight="bold" font-family="Liberation Sans">?</text></svg>
<div class="r" style="left:3px;top:120px;width:1276px;height:770px;background:#fffcf5"></div>
<div class="t" style="left:10.50px;top:137px;font-size:11px;line-height:11px;letter-spacing:-0.021px;transform:scaleY(1.125);transform-origin:0 9px;">Ед. измерения:</div>
<div class="r" style="left:97px;top:132px;width:80px;height:19px;background:#fff;border:1px solid #c8bb8c;border-radius:3px 0 0 3px;box-sizing:border-box"></div>
<div class="r" style="left:162px;top:133px;width:14px;height:17px;background:#f7f2e2;border-left:1px solid #d8ceaa"></div>
<div class="t" style="left:100.00px;top:137px;font-size:11px;line-height:11px;color:#000;letter-spacing:0.325px;transform:scaleY(1.125);transform-origin:0 9px;">в рублях</div>
<svg class="r" style="left:165px;top:140px;" width="8" height="4" viewBox="0 0 8 4"><path d="M0 0H8L4.0 4Z" fill="#1a1a1a"/></svg>
<div class="t" style="left:184.00px;top:137px;font-size:11px;line-height:11px;letter-spacing:0.099px;transform:scaleY(1.125);transform-origin:0 9px;">Точность:</div>
<div class="r" style="left:241px;top:132px;width:32px;height:19px;background:#fff;border:1px solid #c8bb8c;border-radius:3px;box-sizing:border-box"></div>
<div class="r" style="left:259px;top:133px;width:13px;height:17px;background:#f7f2e2;border-left:1px solid #d8ceaa"></div>
<div class="t" style="left:249.50px;top:137px;font-size:11px;line-height:11px;color:#000;transform:scaleY(1.125);transform-origin:0 9px;">0</div>
<svg class="r" style="left:262px;top:134px;" width="7" height="15" viewBox="0 0 7 15"><path d="M0.5 4L3.5 1L6.5 4Z" fill="#3a2b00"/><path d="M0.5 11L3.5 14L6.5 11Z" fill="#3a2b00"/></svg>
<div class="t" style="left:334.00px;top:137px;font-size:11px;line-height:11px;letter-spacing:0.118px;transform:scaleY(1.125);transform-origin:0 9px;">Организация:</div>
<div class="t" style="left:411.00px;top:137px;font-size:11px;line-height:11px;color:#3a5ad0;letter-spacing:0.498px;transform:scaleY(1.125);transform-origin:0 9px;">''Кейфор''</div>
<div class="t" style="left:11.50px;top:161px;font-size:11px;line-height:11px;letter-spacing:0.080px;transform:scaleY(1.125);transform-origin:0 9px;">Дата подписи:</div>
<div class="r" style="left:97px;top:156px;width:80px;height:19px;background:#fff;border:1px solid #c8bb8c;border-radius:3px 0 0 3px;box-sizing:border-box"></div>
<div class="r" style="left:162px;top:157px;width:14px;height:17px;background:#f7f2e2;border-left:1px solid #d8ceaa"></div>
<div class="t" style="left:100.00px;top:161px;font-size:11px;line-height:11px;color:#000;letter-spacing:-0.023px;transform:scaleY(1.125);transform-origin:0 9px;">18.10.2017</div>
<svg class="r" style="left:165px;top:161px;" width="9" height="9" viewBox="0 0 9 9"><rect x="0" y="0" width="9" height="9" fill="#000"/><rect x="1" y="1" width="2" height="1" fill="#fff"/><rect x="6" y="1" width="2" height="1" fill="#fff"/><rect x="4" y="1" width="1" height="7" fill="#fff"/><rect x="1" y="3" width="7" height="1" fill="#fff"/><rect x="1" y="5" width="7" height="1" fill="#fff"/><rect x="1" y="7" width="7" height="1" fill="#fff"/><rect x="2" y="3" width="1" height="5" fill="#fff"/><rect x="6" y="3" width="1" height="5" fill="#fff"/></svg>
<div class="r" style="left:181px;top:159px;width:13px;height:13px;background:#fff;border:1px solid #a39a74;border-radius:3px;box-sizing:border-box"></div>
<div class="t" style="left:195.50px;top:161px;font-size:11px;line-height:11px;letter-spacing:-0.004px;transform:scaleY(1.125);transform-origin:0 9px;">Отключить авторасчет</div>
<div class="r" style="left:334px;top:156px;width:116px;height:19px;background:#fff;border:1px solid #c8bb8c;border-radius:3px 0 0 3px;box-sizing:border-box"></div>
<div class="r" style="left:435px;top:157px;width:14px;height:17px;background:#f7f2e2;border-left:1px solid #d8ceaa"></div>
<div class="t" style="left:336.00px;top:161px;font-size:11px;line-height:11px;color:#000;letter-spacing:-0.332px;transform:scaleY(1.125);transform-origin:0 9px;">Первичный</div>
<svg class="r" style="left:438px;top:164px;" width="8" height="4" viewBox="0 0 8 4"><path d="M0 0H8L4.0 4Z" fill="#1a1a1a"/></svg>
<div class="t" style="left:454.00px;top:161px;font-size:11px;line-height:11px;transform:scaleY(1.125);transform-origin:0 9px;">/</div>
<div class="r" style="left:465px;top:156px;width:49px;height:19px;background:#fbf9f2;border:1px solid #e0d8bc;border-radius:3px;box-sizing:border-box"></div>
<div class="r" style="left:500px;top:157px;width:13px;height:17px;background:#f7f2e0"></div>
<div class="t" style="left:490.50px;top:161px;font-size:11px;line-height:11px;color:#b0a890;transform:scaleY(1.125);transform-origin:0 9px;">1</div>
<svg class="r" style="left:503px;top:158px;" width="7" height="15" viewBox="0 0 7 15"><path d="M0.5 4L3.5 1L6.5 4Z" fill="#c8b890"/><path d="M0.5 11L3.5 14L6.5 11Z" fill="#c8b890"/></svg>
<div class="r" style="left:1181px;top:159px;width:90px;height:19px;background:linear-gradient(#fffdf6,#f1ead2);border:1px solid #c8bb8c;border-radius:3px;box-sizing:border-box"></div>
<div class="t" style="left:1188.50px;top:164px;font-size:11px;line-height:11px;letter-spacing:0.041px;transform:scaleY(1.125);transform-origin:0 9px;">Перейти к ...</div>
<svg class="r" style="left:1259px;top:166px;" width="8" height="4" viewBox="0 0 8 4"><path d="M0 0H8L4.0 4Z" fill="#c8a888"/></svg>
<div class="r" style="left:11px;top:180px;width:75px;height:18px;background:linear-gradient(#f6f0dc,#ece3c6);border:1px solid #c8bb8c;border-bottom:none;border-radius:4px 4px 0 0;box-sizing:border-box"></div>
<div class="t" style="left:20.50px;top:185px;font-size:11px;line-height:11px;letter-spacing:0.140px;transform:scaleY(1.125);transform-origin:0 9px;">Титульный</div>
<div class="r" style="left:92px;top:180px;width:75px;height:18px;background:linear-gradient(#f6f0dc,#ece3c6);border:1px solid #c8bb8c;border-bottom:none;border-radius:4px 4px 0 0;box-sizing:border-box"></div>
<div class="t" style="left:101.50px;top:185px;font-size:11px;line-height:11px;letter-spacing:0.108px;transform:scaleY(1.125);transform-origin:0 9px;">Раздел 1.1</div>
<div class="r" style="left:173px;top:180px;width:75px;height:18px;background:linear-gradient(#f6f0dc,#ece3c6);border:1px solid #c8bb8c;border-bottom:none;border-radius:4px 4px 0 0;box-sizing:border-box"></div>
<div class="t" style="left:183.00px;top:185px;font-size:11px;line-height:11px;letter-spacing:0.108px;transform:scaleY(1.125);transform-origin:0 9px;">Раздел 1.2</div>
<div class="r" style="left:254px;top:180px;width:75px;height:18px;background:linear-gradient(#f6f0dc,#ece3c6);border:1px solid #c8bb8c;border-bottom:none;border-radius:4px 4px 0 0;box-sizing:border-box"></div>
<div class="t" style="left:264.00px;top:185px;font-size:11px;line-height:11px;letter-spacing:0.030px;transform:scaleY(1.125);transform-origin:0 9px;">Раздел 1.3</div>
<div class="r" style="left:401px;top:180px;width:112px;height:18px;background:linear-gradient(#f6f0dc,#ece3c6);border:1px solid #c8bb8c;border-bottom:none;border-radius:4px 4px 0 0;box-sizing:border-box"></div>
<div class="t" style="left:410.00px;top:185px;font-size:11px;line-height:11px;letter-spacing:0.141px;transform:scaleY(1.125);transform-origin:0 9px;">Прил.1 к Листу 02</div>
<div class="r" style="left:519px;top:180px;width:112px;height:18px;background:linear-gradient(#f6f0dc,#ece3c6);border:1px solid #c8bb8c;border-bottom:none;border-radius:4px 4px 0 0;box-sizing:border-box"></div>
<div class="t" style="left:528.50px;top:185px;font-size:11px;line-height:11px;letter-spacing:0.132px;transform:scaleY(1.125);transform-origin:0 9px;">Прил.2 к Листу 02</div>
<div class="r" style="left:637px;top:180px;width:112px;height:18px;background:linear-gradient(#f6f0dc,#ece3c6);border:1px solid #c8bb8c;border-bottom:none;border-radius:4px 4px 0 0;box-sizing:border-box"></div>
<div class="t" style="left:646.50px;top:185px;font-size:11px;line-height:11px;letter-spacing:0.132px;transform:scaleY(1.125);transform-origin:0 9px;">Прил.3 к Листу 02</div>
<div class="r" style="left:755px;top:180px;width:112px;height:18px;background:linear-gradient(#f6f0dc,#ece3c6);border:1px solid #c8bb8c;border-bottom:none;border-radius:4px 4px 0 0;box-sizing:border-box"></div>
<div class="t" style="left:764.50px;top:185px;font-size:11px;line-height:11px;letter-spacing:0.132px;transform:scaleY(1.125);transform-origin:0 9px;">Прил.4 к Листу 02</div>
<div class="r" style="left:873px;top:180px;width:112px;height:18px;background:linear-gradient(#f6f0dc,#ece3c6);border:1px solid #c8bb8c;border-bottom:none;border-radius:4px 4px 0 0;box-sizing:border-box"></div>
<div class="t" style="left:882.50px;top:185px;font-size:11px;line-height:11px;letter-spacing:0.132px;transform:scaleY(1.125);transform-origin:0 9px;">Прил.5 к Листу 02</div>
<div class="r" style="left:991px;top:180px;width:112px;height:18px;background:linear-gradient(#f6f0dc,#ece3c6);border:1px solid #c8bb8c;border-bottom:none;border-radius:4px 4px 0 0;box-sizing:border-box"></div>
<div class="t" style="left:1000.50px;top:185px;font-size:11px;line-height:11px;letter-spacing:0.132px;transform:scaleY(1.125);transform-origin:0 9px;">Прил.6 к Листу 02</div>
<div class="r" style="left:1109px;top:180px;width:118px;height:18px;background:linear-gradient(#f6f0dc,#ece3c6);border:1px solid #c8bb8c;border-bottom:none;border-radius:4px 4px 0 0;box-sizing:border-box"></div>
<div class="t" style="left:1118.50px;top:185px;font-size:11px;line-height:11px;letter-spacing:0.090px;transform:scaleY(1.125);transform-origin:0 9px;">Прил.6а к Листу 02</div>
<div class="r" style="left:11px;top:198px;width:1260px;height:661px;border:1px solid #c8bb8c;background:#fffcf5;box-sizing:border-box"></div>
<div class="r" style="left:335px;top:180px;width:60px;height:19px;background:#fffdf8;border:1px solid #c8bb8c;border-bottom:none;border-radius:4px 4px 0 0;box-sizing:border-box"></div>
<div class="r" style="left:337px;top:181px;width:56px;height:2px;background:#f8cf8a;border-radius:2px 2px 0 0"></div>
<div class="t" style="left:346.00px;top:185px;font-size:11px;line-height:11px;letter-spacing:0.258px;transform:scaleY(1.125);transform-origin:0 9px;">Лист 02</div>
<div class="r" style="left:1243px;top:183px;width:14px;height:14px;background:#f5efd8"></div>
<svg class="r" style="left:1247px;top:185px;" width="7" height="10" viewBox="0 0 7 10"><path d="M6.5 0V10L0.5 5Z" fill="#a89860"/></svg>
<div class="r" style="left:1257px;top:183px;width:14px;height:14px;background:linear-gradient(#fdfbf4,#efe9d4);border:1px solid #c8bb8c;border-radius:2px;box-sizing:border-box"></div>
<svg class="r" style="left:1261px;top:185px;" width="7" height="10" viewBox="0 0 7 10"><path d="M0.5 0V10L6.5 5Z" fill="#4a3a10"/></svg>
<div class="r" style="left:18px;top:205px;width:1246px;height:623px;background:#fff;border:1px solid #c8bb8c;box-sizing:border-box"></div>
<div class="t" style="left:260.50px;top:210px;font-size:12px;line-height:12px;color:#000;letter-spacing:0.316px;">Лицензия:</div>
<div class="t" style="left:328.50px;top:210px;font-size:12px;line-height:12px;color:#000;letter-spacing:0.460px;">серия</div>
<div class="r" style="left:375px;top:205px;width:43px;height:21px;border:1px solid #000;border-top:none;box-sizing:border-box"></div>
<div class="t" style="left:429.00px;top:210px;font-size:12px;line-height:12px;color:#000;letter-spacing:0.591px;">номер</div>
<div class="r" style="left:476px;top:205px;width:65px;height:21px;border:1px solid #000;border-top:none;box-sizing:border-box"></div>
<div class="t" style="left:549.00px;top:210px;font-size:12px;line-height:12px;color:#000;letter-spacing:0.144px;">вид</div>
<div class="r" style="left:579px;top:205px;width:33px;height:21px;border:1px solid #000;border-top:none;box-sizing:border-box"></div>
<div class="t" style="left:619.50px;top:210px;font-size:12px;line-height:12px;font-style:italic;color:#000;">/</div>
<div class="r" style="left:632px;top:205px;width:33px;height:21px;border:1px solid #000;border-top:none;box-sizing:border-box"></div>
<div class="t" style="left:193.00px;top:237px;font-size:11px;line-height:11px;font-style:italic;color:#000;letter-spacing:-0.050px;">Показатели</div>
<div class="t" style="left:222.00px;top:251px;font-size:11px;line-height:11px;font-style:italic;color:#000;">1</div>
<div class="t" style="left:433.00px;top:237px;font-size:11px;line-height:11px;font-style:italic;color:#000;letter-spacing:-0.182px;">Код строки</div>
<div class="t" style="left:461.00px;top:251px;font-size:11px;line-height:11px;font-style:italic;color:#000;">2</div>
<div class="t" style="left:538.00px;top:237px;font-size:11px;line-height:11px;font-style:italic;color:#000;letter-spacing:-0.028px;">Сумма в рублях</div>
<div class="t" style="left:574.50px;top:251px;font-size:11px;line-height:11px;font-style:italic;color:#000;">3</div>
<div class="r" style="left:480px;top:272px;width:176px;height:21px;background:#c6ddc6;border:1px solid #000;box-sizing:border-box;box-shadow:inset 1px 1px 0 #d8f0d8"></div>
<div class="t" style="left:606.00px;top:277px;font-size:12px;line-height:12px;font-weight:bold;color:#000;letter-spacing:0.360px;-webkit-text-stroke:0.25px #000;">577 056</div>
<div class="t" style="left:452.00px;top:277px;font-size:12px;line-height:12px;color:#000;">010</div>
<div class="t" style="left:28.00px;top:277px;font-size:12px;line-height:12px;color:#000;letter-spacing:0.092px;">Доходы от реализации (стр.040 Приложения № 1 к Листу 02)</div>
<div class="r" style="left:480px;top:304px;width:176px;height:21px;background:#c6ddc6;border:1px solid #000;box-sizing:border-box;box-shadow:inset 1px 1px 0 #d8f0d8"></div>
<div class="r" style="left:648px;top:316px;width:3px;height:1px;background:#000"></div>
<div class="t" style="left:452.00px;top:309px;font-size:12px;line-height:12px;color:#000;">020</div>
<div class="t" style="left:28.00px;top:309px;font-size:12px;line-height:12px;color:#000;letter-spacing:0.142px;">Внереализационные доходы (стр.100 Приложения № 1 к Листу 02)</div>
<div class="r" style="left:480px;top:336px;width:176px;height:21px;background:#c6ddc6;border:1px solid #000;box-sizing:border-box;box-shadow:inset 1px 1px 0 #d8f0d8"></div>
<div class="t" style="left:605.00px;top:341px;font-size:12px;line-height:12px;font-weight:bold;color:#000;letter-spacing:0.459px;-webkit-text-stroke:0.25px #000;">553 115</div>
<div class="t" style="left:452.00px;top:341px;font-size:12px;line-height:12px;color:#000;">030</div>
<div class="t" style="left:28.00px;top:343px;font-size:12px;line-height:12px;color:#000;letter-spacing:0.054px;">Расходы, уменьшающие сумму доходов от реализации (стр.130</div>
<div class="t" style="left:28.00px;top:359px;font-size:12px;line-height:12px;color:#000;letter-spacing:0.171px;">Приложения № 2 к Листу 02)</div>
<div class="r" style="left:480px;top:379px;width:176px;height:21px;background:#c6ddc6;border:1px solid #000;box-sizing:border-box;box-shadow:inset 1px 1px 0 #d8f0d8"></div>
<div class="t" style="left:614.00px;top:384px;font-size:12px;line-height:12px;font-weight:bold;color:#000;letter-spacing:0.087px;-webkit-text-stroke:0.25px #000;">22 268</div>
<div class="t" style="left:452.00px;top:384px;font-size:12px;line-height:12px;color:#000;">040</div>
<div class="t" style="left:28.00px;top:386px;font-size:12px;line-height:12px;color:#000;letter-spacing:0.196px;">Внереализационные расходы (стр.200+стр.300 Приложения № 2</div>
<div class="t" style="left:28.00px;top:402px;font-size:12px;line-height:12px;color:#000;letter-spacing:0.209px;">к Листу 02)</div>
<div class="r" style="left:480px;top:422px;width:176px;height:21px;background:#c6ddc6;border:1px solid #000;box-sizing:border-box;box-shadow:inset 1px 1px 0 #d8f0d8"></div>
<div class="r" style="left:648px;top:434px;width:3px;height:1px;background:#000"></div>
<div class="t" style="left:452.00px;top:427px;font-size:12px;line-height:12px;color:#000;">050</div>
<div class="t" style="left:28.00px;top:427px;font-size:12px;line-height:12px;color:#000;letter-spacing:0.121px;">Убытки (стр.360 Приложения № 3 к Листу 02)</div>
<div class="r" style="left:480px;top:486px;width:176px;height:21px;background:#ffffc6;border:1px solid #000;box-sizing:border-box;box-shadow:inset 1px 1px 0 #ffffe0"></div>
<div class="r" style="left:648px;top:498px;width:3px;height:1px;background:#000"></div>
<div class="t" style="left:452.00px;top:491px;font-size:12px;line-height:12px;color:#000;">070</div>
<div class="t" style="left:29.00px;top:491px;font-size:12px;line-height:12px;color:#000;letter-spacing:0.524px;">Доходы, исключаемые из прибыли</div>
<div class="r" style="left:480px;top:518px;width:176px;height:21px;background:#ffffc6;border:1px solid #000;box-sizing:border-box;box-shadow:inset 1px 1px 0 #ffffe0"></div>
<div class="r" style="left:648px;top:530px;width:3px;height:1px;background:#000"></div>
<div class="t" style="left:452.00px;top:523px;font-size:12px;line-height:12px;color:#000;">080</div>
<div class="t" style="left:28.00px;top:525px;font-size:12px;line-height:12px;color:#000;letter-spacing:0.123px;">Прибыль, полученная Банком России от осуществления</div>
<div class="t" style="left:29.00px;top:541px;font-size:12px;line-height:12px;color:#000;letter-spacing:0.006px;">деятельности, связанной с выполнением его функций, и облагаемая</div>
<div class="t" style="left:28.00px;top:556px;font-size:12px;line-height:12px;color:#000;letter-spacing:0.107px;">по налоговой ставке 0%</div>
<div class="r" style="left:480px;top:573px;width:176px;height:21px;background:#c6ddc6;border:1px solid #000;box-sizing:border-box;box-shadow:inset 1px 1px 0 #d8f0d8"></div>
<div class="t" style="left:620.50px;top:578px;font-size:12px;line-height:12px;font-weight:bold;color:#000;letter-spacing:0.095px;-webkit-text-stroke:0.25px #000;">1 673</div>
<div class="t" style="left:452.00px;top:578px;font-size:12px;line-height:12px;color:#000;">100</div>
<div class="t" style="left:28.00px;top:580px;font-size:12px;line-height:12px;color:#000;letter-spacing:0.183px;">Налоговая база</div>
<div class="t" style="left:28.00px;top:596px;font-size:12px;line-height:12px;color:#000;letter-spacing:0.060px;">(стр.060 - стр.070 - стр.080 - стр.400 Приложения № 2 к Листу 02 +</div>
<div class="t" style="left:28.00px;top:611px;font-size:12px;line-height:12px;color:#000;letter-spacing:0.027px;">стр.100 Листов 05 + стр.530 Листа 06)</div>
<div class="r" style="left:480px;top:629px;width:176px;height:21px;background:#ffffc6;border:1px solid #000;box-sizing:border-box;box-shadow:inset 1px 1px 0 #ffffe0"></div>
<div class="r" style="left:648px;top:641px;width:3px;height:1px;background:#000"></div>
<div class="t" style="left:452.00px;top:634px;font-size:12px;line-height:12px;color:#000;">110</div>
<div class="t" style="left:28.00px;top:636px;font-size:12px;line-height:12px;color:#000;letter-spacing:0.007px;">Сумма убытка или части убытка, уменьшающего налоговую базу за</div>
<div class="t" style="left:28.00px;top:652px;font-size:12px;line-height:12px;color:#000;letter-spacing:0.100px;">отчетный (налоговый) период (стр.150 Приложения № 4 к Листу 02)</div>
<div class="r" style="left:480px;top:670px;width:176px;height:21px;background:#c6ddc6;border:1px solid #000;box-sizing:border-box;box-shadow:inset 1px 1px 0 #d8f0d8"></div>
<div class="t" style="left:620.50px;top:675px;font-size:12px;line-height:12px;font-weight:bold;color:#000;letter-spacing:0.095px;-webkit-text-stroke:0.25px #000;">1 673</div>
<div class="t" style="left:452.00px;top:675px;font-size:12px;line-height:12px;color:#000;">120</div>
<div class="t" style="left:28.00px;top:677px;font-size:12px;line-height:12px;color:#000;letter-spacing:0.154px;">Налоговая база для исчисления налога (стр.100-стр.110)</div>
<div class="r" style="left:480px;top:701px;width:176px;height:21px;background:#ffffc6;border:1px solid #000;box-sizing:border-box;box-shadow:inset 1px 1px 0 #ffffe0"></div>
<div class="r" style="left:648px;top:713px;width:3px;height:1px;background:#000"></div>
<div class="t" style="left:452.00px;top:706px;font-size:12px;line-height:12px;color:#000;">130</div>
<div class="t" style="left:35.00px;top:708px;font-size:12px;line-height:12px;color:#000;letter-spacing:0.107px;">в том числе в бюджет субъекта Российской Федерации (с учетом</div>
<div class="t" style="left:35.00px;top:724px;font-size:12px;line-height:12px;color:#000;letter-spacing:0.190px;">положений пункта 1 статьи 284 Налогового кодекса Российской</div>
<div class="t" style="left:35.00px;top:739px;font-size:12px;line-height:12px;color:#000;letter-spacing:0.382px;">Федерации)</div>
<div class="r" style="left:481px;top:454px;width:176px;height:21px;background:#c6ddc6;border:1px solid #000;box-sizing:border-box;box-shadow:inset 1px 1px 0 #d8f0d8"></div>
<div class="t" style="left:621.50px;top:459px;font-size:12px;line-height:12px;font-weight:bold;color:#000;letter-spacing:0.095px;-webkit-text-stroke:0.25px #000;">1 673</div>
<div class="t" style="left:453.00px;top:459px;font-size:12px;line-height:12px;color:#000;">060</div>
<div class="t" style="left:28.00px;top:459px;font-size:12px;line-height:12px;font-weight:bold;color:#000;letter-spacing:-0.296px;-webkit-text-stroke:0.25px #000;">Итого прибыль (убыток)</div>
<div class="t" style="left:178.00px;top:459px;font-size:12px;line-height:12px;color:#000;letter-spacing:0.077px;">(стр.010+стр.020-стр.030-стр.040+стр.050)</div>
<div class="r" style="left:480px;top:757px;width:71px;height:21px;background:#c6ddc6;border:1px solid #000;box-sizing:border-box;box-shadow:inset 1px 1px 0 #d8f0d8"></div>
<div class="t" style="left:508.50px;top:762px;font-size:12px;line-height:12px;font-weight:bold;color:#000;letter-spacing:0.160px;-webkit-text-stroke:0.25px #000;">20,000</div>
<div class="t" style="left:452.00px;top:762px;font-size:12px;line-height:12px;color:#000;">140</div>
<div class="t" style="left:28.00px;top:764px;font-size:12px;line-height:12px;color:#000;letter-spacing:0.079px;">Ставка налога - всего, (%)</div>
<div class="t" style="left:35.00px;top:785px;font-size:12px;line-height:12px;color:#000;letter-spacing:0.111px;">в том числе:</div>
<div class="r" style="left:19px;top:795px;width:1228px;height:16px;overflow:hidden">
<div class="r" style="left:461px;top:9px;width:71px;height:21px;background:#ffffc6;border:1px solid #000;box-sizing:border-box"></div>
<div class="t" style="left:435.6px;top:13px;font-size:12px;line-height:12px;color:#000">150</div>
<div class="t" style="left:500px;top:14px;font-size:12px;line-height:12px;color:#000;font-weight:bold">0,00</div>
<div class="t" style="left:16px;top:14px;font-size:12px;line-height:12px;color:#000">в федеральный бюджет</div>
</div>
<svg class="r" style="left:580px;top:320px;" width="100" height="60" viewBox="0 0 100 60"><path d="M88.1 14.2L93.2 21.5L93.7 29.2L87.7 33.1L80.4 34.4L75.6 37.8L66.2 47.7L61.9 49.7L58.4 49.4L50.7 45.4L30.1 45.1L20.6 41.3L15.5 36.1L9.5 27.5L8.2 22.3L8.6 11.2L10.7 9L25.4 9L29.2 12L37 14.2L67 14.2L70.5 15.9L75.6 16.8L81.6 18L89.4 17.6" fill="none" stroke="#000" stroke-width="1.1"/></svg>
<svg class="r" style="left:590px;top:440px;" width="100" height="50" viewBox="0 0 100 50"><path d="M89.8 11.7L84.4 9L78.9 7.4L60.2 7.4L59.4 6.25L15.2 6.25L12.5 7.8L12.1 15.6L13.3 19.5L21.1 28.9L27.3 33.6L39.1 39.8L45.3 42.6L71.9 42.6L76.2 41L82 32.8L83.6 25.8L84.4 18L84.4 13.3" fill="none" stroke="#000" stroke-width="1.1"/></svg>
<div class="r" style="left:1247px;top:205px;width:16px;height:606px;background:#fdfbf3;border-left:1px solid #c8bb8c;box-sizing:border-box"></div>
<div class="r" style="left:1247px;top:205px;width:16px;height:22px;background:linear-gradient(to right,#f6f1e0,#ebe3c6);border:1px solid #c8bb8c;box-sizing:border-box"></div>
<svg class="r" style="left:1251px;top:211px;" width="9" height="8" viewBox="0 0 9 8"><path d="M0 8H9L4.5 0Z" fill="#888078"/></svg>
<div class="r" style="left:1247px;top:279px;width:16px;height:153px;background:linear-gradient(to right,#f9f5e2,#e9e0c0);border:1px solid #c8bb8c;box-sizing:border-box"></div>
<svg class="r" style="left:1253px;top:352px;" width="5" height="5" viewBox="0 0 5 5"><circle cx="2.5" cy="2.5" r="2" fill="#d8d0b8"/></svg>
<div class="r" style="left:1247px;top:790px;width:16px;height:22px;background:linear-gradient(to right,#f6f1e0,#ebe3c6);border:1px solid #c8bb8c;box-sizing:border-box"></div>
<svg class="r" style="left:1251px;top:797px;" width="9" height="8" viewBox="0 0 9 8"><path d="M0 0H9L4.5 8Z" fill="#888078"/></svg>
<div class="r" style="left:19px;top:811px;width:1228px;height:16px;background:#fdfbf3;border-top:1px solid #c8bb8c;box-sizing:border-box"></div>
<div class="r" style="left:19px;top:811px;width:22px;height:16px;background:linear-gradient(#f6f1e0,#ebe3c6);border:1px solid #c8bb8c;box-sizing:border-box"></div>
<svg class="r" style="left:25px;top:815px;" width="8" height="9" viewBox="0 0 8 9"><path d="M8 0V9L0 4.5Z" fill="#c8c0b0"/></svg>
<div class="r" style="left:40px;top:811px;width:1098px;height:16px;background:linear-gradient(#f9f5e2,#e9e0c0);border:1px solid #c8bb8c;box-sizing:border-box"></div>
<svg class="r" style="left:584px;top:816px;" width="6" height="6" viewBox="0 0 6 6"><circle cx="3" cy="3" r="2" fill="#d8d0b8"/></svg>
<div class="r" style="left:1226px;top:811px;width:22px;height:16px;background:linear-gradient(#f6f1e0,#ebe3c6);border:1px solid #c8bb8c;box-sizing:border-box"></div>
<svg class="r" style="left:1234px;top:815px;" width="8" height="9" viewBox="0 0 8 9"><path d="M0 0V9L8 4.5Z" fill="#888078"/></svg>
<div class="r" style="left:1247px;top:811px;width:16px;height:16px;background:#fdfbf3;border-left:1px solid #c8bb8c;border-top:1px solid #c8bb8c;box-sizing:border-box"></div>
<div class="t" style="left:734.00px;top:838px;font-size:11px;line-height:11px;letter-spacing:-0.028px;transform:scaleY(1.125);transform-origin:0 9px;">Дополнительные страницы:</div>
<div class="r" style="left:883px;top:833px;width:20px;height:19px;background:linear-gradient(#fffdf6,#efe8cf);border:1px solid #ddd3b0;border-radius:3px;box-sizing:border-box"></div>
<svg class="r" style="left:886px;top:837px;" width="14" height="9" viewBox="0 0 14 9"><path d="M0 4.5L5 0V2.5H14V6.5H5V9Z" fill="#9a9cbc"/></svg>
<div class="t" style="left:923.00px;top:838px;font-size:11px;line-height:11px;color:#2a5ae8;letter-spacing:0.067px;transform:scaleY(1.125);transform-origin:0 9px;">1 из 1</div>
<div class="r" style="left:972px;top:833px;width:20px;height:19px;background:linear-gradient(#fffdf6,#efe8cf);border:1px solid #ddd3b0;border-radius:3px;box-sizing:border-box"></div>
<svg class="r" style="left:975px;top:837px;" width="14" height="9" viewBox="0 0 14 9"><path d="M14 4.5L9 0V2.5H0V6.5H9V9Z" fill="#9a9cbc"/></svg>
<div class="r" style="left:1012px;top:833px;width:80px;height:19px;background:linear-gradient(#fffdf6,#efe8cf);border:1px solid #c8bb8c;border-radius:4px;box-sizing:border-box"></div>
<div class="t" style="left:1027.50px;top:838px;font-size:11px;line-height:11px;letter-spacing:0.011px;transform:scaleY(1.125);transform-origin:0 9px;">Добавить</div>
<div class="r" style="left:1098px;top:833px;width:80px;height:19px;background:linear-gradient(#fffdf6,#efe8cf);border:1px solid #c8bb8c;border-radius:4px;box-sizing:border-box"></div>
<div class="t" style="left:1115.50px;top:838px;font-size:11px;line-height:11px;transform:scaleY(1.125);transform-origin:0 9px;">Удалить</div>
<div class="r" style="left:1184px;top:833px;width:80px;height:19px;background:linear-gradient(#fffdf6,#efe8cf);border:1px solid #c8bb8c;border-radius:4px;box-sizing:border-box"></div>
<div class="t" style="left:1201.50px;top:838px;font-size:11px;line-height:11px;letter-spacing:0.054px;transform:scaleY(1.125);transform-origin:0 9px;">Перейти</div>
<div class="t" style="left:10.25px;top:870px;font-size:11px;line-height:11px;letter-spacing:0.034px;transform:scaleY(1.125);transform-origin:0 9px;">Статус:</div>
<div class="r" style="left:58px;top:865px;width:119px;height:19px;background:#fff;border:1px solid #c8bb8c;border-radius:3px;box-sizing:border-box"></div>
<div class="r" style="left:162px;top:866px;width:14px;height:17px;background:linear-gradient(#faf6e8,#efe8cf);border-left:1px solid #d8ceaa"></div>
<svg class="r" style="left:62px;top:868px;" width="13" height="14" viewBox="0 0 13 14"><path d="M0.5 0.5H8.5L12.5 4.5V13.5H0.5Z" fill="#e8f4fc" stroke="#3a9ad8"/><path d="M3 6H10M3 8.5H10M3 11H8" stroke="#7ab8e0"/></svg>
<div class="t" style="left:80.25px;top:870px;font-size:11px;line-height:11px;color:#000;letter-spacing:0.021px;transform:scaleY(1.125);transform-origin:0 9px;">В работе</div>
<div class="t" style="left:164.50px;top:870px;font-size:11px;line-height:11px;color:#000;transform:scaleY(1.125);transform-origin:0 9px;">...</div>
<div class="t" style="left:193.50px;top:870px;font-size:11px;line-height:11px;letter-spacing:0.098px;transform:scaleY(1.125);transform-origin:0 9px;">Комментарий:</div>
<div class="r" style="left:274px;top:865px;width:997px;height:19px;background:#fff;border:1px solid #c8bb8c;border-radius:4px;box-sizing:border-box"></div>
<div class="r" style="left:3px;top:890px;width:1276px;height:1px;background:#cfc39a"></div>
<div class="r" style="left:3px;top:891px;width:1276px;height:24px;background:#f7f2df"></div>
<svg class="r" style="left:1062px;top:895px;" width="14" height="15" viewBox="0 0 14 15"><rect x="3.5" y="0.5" width="7" height="4" fill="#fff" stroke="#4a6a98"/><rect x="0.5" y="4.5" width="13" height="6" rx="1.5" fill="#6a8ec0" stroke="#3a5a88"/><rect x="3.5" y="8.5" width="7" height="5.5" fill="#fff" stroke="#4a6a98"/></svg>
<div class="t" style="left:1078.00px;top:898px;font-size:11px;line-height:11px;letter-spacing:0.223px;transform:scaleY(1.125);transform-origin:0 9px;">Печать</div>
<svg class="r" style="left:1118px;top:902px;" width="5" height="4" viewBox="0 0 5 4"><path d="M0 0H5L2.5 4Z" fill="#3a2b00"/></svg>
<div class="r" style="left:1128px;top:894px;width:1px;height:19px;background:linear-gradient(to bottom, rgba(205,191,152,0), #cdbf98 30%, #cdbf98 70%, rgba(205,191,152,0))"></div>
<div class="r" style="left:1129px;top:894px;width:1px;height:19px;background:linear-gradient(to bottom, rgba(255,255,255,0), #fff 30%, #fff 70%, rgba(255,255,255,0))"></div>
<div class="t" style="left:1135.50px;top:897px;font-size:12px;line-height:12px;font-weight:bold;color:#3a2b00;letter-spacing:-0.500px;-webkit-text-stroke:0.3px #3a2b00;">OK</div>
<div class="r" style="left:1159px;top:894px;width:1px;height:19px;background:linear-gradient(to bottom, rgba(205,191,152,0), #cdbf98 30%, #cdbf98 70%, rgba(205,191,152,0))"></div>
<div class="r" style="left:1160px;top:894px;width:1px;height:19px;background:linear-gradient(to bottom, rgba(255,255,255,0), #fff 30%, #fff 70%, rgba(255,255,255,0))"></div>
<div class="t" style="left:1167.00px;top:898px;font-size:11px;line-height:11px;letter-spacing:0.119px;transform:scaleY(1.125);transform-origin:0 9px;">Записать</div>
<div class="r" style="left:1222px;top:894px;width:1px;height:19px;background:linear-gradient(to bottom, rgba(205,191,152,0), #cdbf98 30%, #cdbf98 70%, rgba(205,191,152,0))"></div>
<div class="r" style="left:1223px;top:894px;width:1px;height:19px;background:linear-gradient(to bottom, rgba(255,255,255,0), #fff 30%, #fff 70%, rgba(255,255,255,0))"></div>
<div class="t" style="left:1228.50px;top:898px;font-size:11px;line-height:11px;letter-spacing:0.416px;transform:scaleY(1.125);transform-origin:0 9px;">Закрыть</div>
<div class="r" style="left:0px;top:915px;width:1280px;height:47px;background:#f7f2df"></div>
<div class="r" style="left:0px;top:915px;width:1280px;height:3px;background:#fdfcf6"></div>
<div class="r" style="left:1px;top:915px;width:2px;height:1px;background:#4b4b4b"></div>
<div class="r" style="left:2px;top:918px;width:158px;height:20px;background:#b5b3b5;border:1px solid #d8cca0;box-sizing:border-box"></div>
<svg class="r" style="left:5px;top:920px;" width="15" height="15" viewBox="0 0 15 15"><rect x="0" y="0" width="14" height="13" fill="#3a7ae0"/><rect x="1" y="2" width="3" height="10" fill="#d8e8fb"/><rect x="5.5" y="2" width="3" height="10" fill="#d8e8fb"/><rect x="10" y="2" width="3" height="10" fill="#d8e8fb"/><circle cx="7" cy="8" r="3.5" fill="#c8e0f8" stroke="#a06a30" stroke-width="1.3"/><path d="M9.5 10.5L13 14" stroke="#e07a2a" stroke-width="2"/></svg>
<div class="t" style="left:20.25px;top:923px;font-size:11px;line-height:11px;color:#1a1a1a;letter-spacing:0.039px;transform:scaleY(1.125);transform-origin:0 9px;">Панель функций</div>
<div class="r" style="left:161px;top:918px;width:158px;height:20px;background:#b5b3b5;border:1px solid #d8cca0;box-sizing:border-box"></div>
<svg class="r" style="left:165px;top:920px;" width="12" height="14" viewBox="0 0 12 14"><path d="M0.5 0.5H8.5L11.5 3.5V13.5H0.5Z" fill="#fff" stroke="#6a8ab0"/><rect x="2" y="5" width="1" height="7" fill="#888"/><rect x="3" y="6" width="2" height="5" fill="#e02020"/><rect x="6" y="7" width="2" height="4" fill="#20a020"/></svg>
<div class="t" style="left:179.50px;top:923px;font-size:11px;line-height:11px;color:#1a1a1a;letter-spacing:0.033px;transform:scaleY(1.125);transform-origin:0 9px;">Регламентированная и ...</div>
<div class="r" style="left:320px;top:918px;width:158px;height:20px;background:#b5b3b5;border:1px solid #d8cca0;box-sizing:border-box"></div>
<svg class="r" style="left:323px;top:920px;" width="12" height="14" viewBox="0 0 12 14"><path d="M0.5 0.5H8.5L11.5 3.5V13.5H0.5Z" fill="#f4f8fc" stroke="#8a9ab0"/><path d="M2.5 5H9.5M2.5 7.5H9.5M2.5 10H9.5" stroke="#a8b8c8"/></svg>
<div class="t" style="left:338.00px;top:923px;font-size:11px;line-height:11px;color:#1a1a1a;letter-spacing:0.159px;transform:scaleY(1.125);transform-origin:0 9px;">Посту...: 3 квартал 2017 г.</div>
<div class="r" style="left:479px;top:918px;width:158px;height:20px;background:#b5b3b5;border:1px solid #d8cca0;box-sizing:border-box"></div>
<svg class="r" style="left:482px;top:920px;" width="12" height="14" viewBox="0 0 12 14"><path d="M0.5 0.5H8.5L11.5 3.5V13.5H0.5Z" fill="#f4f8fc" stroke="#8a9ab0"/><path d="M2.5 5H9.5M2.5 7.5H9.5M2.5 10H9.5" stroke="#a8b8c8"/></svg>
<div class="t" style="left:497.50px;top:923px;font-size:11px;line-height:11px;color:#1a1a1a;letter-spacing:0.018px;transform:scaleY(1.125);transform-origin:0 9px;">Счета-...: 3 квартал 2017 г.</div>
<div class="r" style="left:638px;top:918px;width:158px;height:20px;background:#b5b3b5;border:1px solid #d8cca0;box-sizing:border-box"></div>
<svg class="r" style="left:640px;top:919px;" width="16" height="16" viewBox="0 0 16 16"><rect x="0.5" y="3.5" width="14" height="12" fill="#e8eef6" stroke="#6a7a90"/><path d="M2 7H13M2 10H13M2 13H13M5.5 4V15M9.5 4V15" stroke="#6a8ab0"/><text x="0" y="6" font-size="7" fill="#2a5ab0" font-family="Liberation Sans" font-weight="bold">Σ</text></svg>
<div class="t" style="left:656.00px;top:923px;font-size:11px;line-height:11px;color:#1a1a1a;letter-spacing:-0.078px;transform:scaleY(1.125);transform-origin:0 9px;">Оборотно-сальдовая вед...</div>
<div class="r" style="left:797px;top:918px;width:158px;height:20px;background:#b5b3b5;border:1px solid #d8cca0;box-sizing:border-box"></div>
<svg class="r" style="left:799px;top:919px;" width="17" height="17" viewBox="0 0 17 17"><text x="0" y="8" font-size="9" font-weight="bold" fill="#2a9a2a" font-family="Liberation Sans">Дт</text><text x="5" y="16" font-size="9" font-weight="bold" fill="#f03030" font-family="Liberation Sans">Кт</text></svg>
<div class="t" style="left:814.75px;top:923px;font-size:11px;line-height:11px;color:#1a1a1a;letter-spacing:0.140px;transform:scaleY(1.125);transform-origin:0 9px;">Журн...: 3 квартал 2017 г.</div>
<div class="r" style="left:956px;top:918px;width:158px;height:20px;background:#b5b3b5;border:1px solid #d8cca0;box-sizing:border-box"></div>
<svg class="r" style="left:960px;top:920px;" width="12" height="14" viewBox="0 0 12 14"><path d="M0.5 0.5H8.5L11.5 3.5V13.5H0.5Z" fill="#fff" stroke="#6a8ab0"/><rect x="2" y="5" width="1" height="7" fill="#888"/><rect x="3" y="6" width="2" height="5" fill="#e02020"/><rect x="6" y="7" width="2" height="4" fill="#20a020"/></svg>
<div class="t" style="left:976.00px;top:923px;font-size:11px;line-height:11px;color:#1a1a1a;letter-spacing:-0.021px;transform:scaleY(1.125);transform-origin:0 9px;">Декларация по налогу н...</div>
<div class="r" style="left:1115px;top:918px;width:158px;height:20px;background:#b8d0e8;border:1px solid #d8cca0;box-sizing:border-box"></div>
<svg class="r" style="left:1119px;top:920px;" width="12" height="14" viewBox="0 0 12 14"><path d="M0.5 0.5H8.5L11.5 3.5V13.5H0.5Z" fill="#fff" stroke="#6a8ab0"/><rect x="2" y="5" width="1" height="7" fill="#888"/><rect x="3" y="6" width="2" height="5" fill="#e02020"/><rect x="6" y="7" width="2" height="4" fill="#20a020"/></svg>
<div class="t" style="left:1134.50px;top:923px;font-size:11px;line-height:11px;color:#1a1a1a;letter-spacing:0.019px;transform:scaleY(1.125);transform-origin:0 9px;">Декларация по налогу н...</div>
<div class="r" style="left:0px;top:939px;width:1280px;height:1px;background:#fffdf5"></div>
<div class="r" style="left:2px;top:940px;width:1206px;height:19px;border:1px solid #e2dcc4;box-sizing:border-box"></div>
<div class="t" style="left:5.50px;top:945px;font-size:11px;line-height:11px;color:#2a2000;letter-spacing:0.031px;transform:scaleY(1.125);transform-origin:0 9px;">Для получения подсказки нажмите F1</div>
<div class="r" style="left:1213px;top:940px;width:29px;height:19px;border:1px solid #e2dcc4;box-sizing:border-box"></div>
<div class="t" style="left:1216.00px;top:945px;font-size:11px;line-height:11px;color:#9a8444;letter-spacing:-0.196px;transform:scaleY(1.125);transform-origin:0 9px;">CAP</div>
<div class="r" style="left:1247px;top:940px;width:33px;height:19px;border:1px solid #e2dcc4;box-sizing:border-box"></div>
<div class="t" style="left:1249.50px;top:945px;font-size:11px;line-height:11px;color:#2a2000;letter-spacing:0.156px;transform:scaleY(1.125);transform-origin:0 9px;">NUM</div>
<div class="r" style="left:0px;top:960px;width:1280px;height:43px;background:#d4d0c8"></div>
<div class="r" style="left:0px;top:960px;width:1280px;height:1px;background:#f4f2ea"></div>
<div class="r" style="left:0px;top:961px;width:1280px;height:1px;background:#ffffff"></div>
<div class="r" style="left:3px;top:964px;width:51px;height:38px;background:#d4d0c8;border:1px solid;border-color:#fff #404040 #404040 #fff;box-shadow:inset -1px -1px 0 #808080;box-sizing:border-box"></div>
<svg class="r" style="left:5px;top:974px;" width="16" height="15" viewBox="0 0 16 15"><path d="M3 1.5Q5 0 8 1.2L6.8 6.8Q4 5.5 1.8 7Z" fill="#f04a1c"/><path d="M9 1.6Q12 3 15.5 2L14.3 7.6Q11 8.5 7.8 7.2Z" fill="#6cb82a"/><path d="M1.6 7.8Q4 6.4 6.6 7.6L5.4 13.2Q3 12 0.4 13.4Z" fill="#2a8ae0"/><path d="M7.6 8Q11 9.4 14.2 8.4L13 14Q10 15 6.4 13.6Z" fill="#fcc020"/></svg>
<div class="t" style="left:21.00px;top:978px;font-size:11px;line-height:11px;font-weight:bold;color:#000;letter-spacing:0.890px;transform:scaleY(1.125);transform-origin:0 9px;-webkit-text-stroke:0.3px #000;">Пуск</div>
<div class="r" style="left:61px;top:966px;width:1px;height:33px;background:#808080"></div>
<div class="r" style="left:62px;top:966px;width:1px;height:33px;background:#fff"></div>
<svg class="r" style="left:83px;top:967px;" width="29" height="32" viewBox="0 0 29 32"><rect x="2" y="0" width="14" height="24" fill="#8a9098" stroke="#50565e"/><path d="M4 4H14M4 7H14M4 10H14" stroke="#c8ccd0"/><rect x="8" y="16" width="20" height="14" rx="2" fill="#7a8088" stroke="#3a4048"/><path d="M14 16V13H22V16" stroke="#3a4048" fill="none" stroke-width="1.5"/><rect x="9" y="21" width="18" height="2" fill="#a8aeb4"/></svg>
<svg class="r" style="left:133px;top:969px;" width="27" height="26" viewBox="0 0 27 26"><path d="M6 1H27L21 25H0Z" fill="#2a6ac8" stroke="#1a4a98"/><path d="M7 7L13 12L6 17" stroke="#fff" stroke-width="2" fill="none"/><path d="M12 18H19" stroke="#fff" stroke-width="2"/></svg>
<svg class="r" style="left:180px;top:968px;" width="33" height="31" viewBox="0 0 33 31"><path d="M1 4H12L14 7H31V30H1Z" fill="#f4d98a" stroke="#c8a040"/><rect x="4" y="2" width="5" height="3" fill="#3ac83a"/><rect x="22" y="5" width="5" height="3" fill="#3a8ae8"/><path d="M1 12H31V30H1Z" fill="#f8e4a0" stroke="#c8a040"/><path d="M7 30V20H25V30" stroke="#3a8ad8" stroke-width="3" fill="none"/></svg>
<svg class="r" style="left:231px;top:968px;" width="31" height="31" viewBox="0 0 31 31"><circle cx="15.5" cy="15.5" r="15" fill="#db4437"/><path d="M15.5 15.5L28.5 8A15 15 0 0 1 15.5 30.5Z" fill="#ffcd40"/><path d="M15.5 15.5L15.5 30.5A15 15 0 0 1 2.5 8Z" fill="#0f9d58"/><circle cx="15.5" cy="15.5" r="7" fill="#fff"/><circle cx="15.5" cy="15.5" r="5.5" fill="#4285f4"/></svg>
<div class="r" style="left:272px;top:964px;width:48px;height:37px;background:#d4d0c8;border:1px solid;border-color:#fff #404040 #404040 #fff;box-shadow:inset -1px -1px 0 #808080;box-sizing:border-box"></div>
<svg class="r" style="left:279px;top:967px;" width="35" height="33" viewBox="0 0 35 33"><path d="M2 9Q5 3 17 4L30 1.5Q35 5 34 13L33 20Q22 26 9 25Q0 24 1.5 17Z" fill="#ffff00"/><g fill="none" stroke-linecap="round" stroke-linejoin="round"><path d="M2 19.5L6 17L12.5 26.5M20.5 10Q14 7.5 12.5 13Q12 18.5 17.5 18.5L33.5 8.5" stroke="#1a1aff" stroke-width="5"/><path d="M2 19.5L6 17L12.5 26.5M20.5 10Q14 7.5 12.5 13Q12 18.5 17.5 18.5L33.5 8.5" stroke="#fff" stroke-width="3"/><path d="M2 19.5L6 17L12.5 26.5M20.5 10Q14 7.5 12.5 13Q12 18.5 17.5 18.5L33.5 8.5" stroke="#ff1010" stroke-width="1.5"/></g><text x="13" y="31.5" font-size="8" font-weight="bold" fill="#000" font-family="Liberation Sans">V7</text></svg>
<div class="r" style="left:322px;top:964px;width:47px;height:37px;background:#fbfbfa;border:1px solid;border-color:#404040 #fff #fff #404040;box-sizing:border-box"></div>
<svg class="r" style="left:331px;top:967px;" width="30" height="30" viewBox="0 0 30 30"><defs><radialGradient id="g1c" cx="0.45" cy="0.3" r="0.75"><stop offset="0" stop-color="#fff8c8"/><stop offset="0.55" stop-color="#f4d050"/><stop offset="1" stop-color="#d8a020"/></radialGradient></defs><circle cx="15" cy="15" r="14" fill="url(#g1c)" stroke="#e0b040" stroke-width="0.8"/><g fill="none"><path d="M2.5 10.5L6.5 8.5V20.5M19 10Q13 8 12 14Q12 20 17.5 20H29" stroke="#f01010" stroke-width="3.2"/><path d="M2.5 10.5L6.5 8.5V20.5M19 10Q13 8 12 14Q12 20 17.5 20H29" stroke="#ffe8a0" stroke-width="0.9"/></g></svg>
<div class="r" style="left:1062px;top:966px;width:2px;height:33px;background:#fff"></div>
<div class="r" style="left:1064px;top:966px;width:1px;height:33px;background:#808080"></div>
<div class="t" style="left:1072.00px;top:975px;font-size:12px;line-height:12px;color:#000;letter-spacing:-0.215px;">EN</div>
<div class="r" style="left:1093px;top:970px;width:1px;height:26px;background:#fff"></div>
<div class="r" style="left:1094px;top:970px;width:1px;height:26px;background:#808080"></div>
<div class="r" style="left:1097px;top:964px;width:183px;height:37px;border:1px solid;border-color:#808080 #fff #fff #808080;box-sizing:border-box"></div>
<svg class="r" style="left:1103px;top:977px;" width="7" height="9" viewBox="0 0 7 9"><path d="M1 4L3.5 1.5L6 4M1 8L3.5 5.5L6 8" stroke="#000" stroke-width="1.6" fill="none"/></svg>
<svg class="r" style="left:1119px;top:975px;" width="18" height="16" viewBox="0 0 18 16"><path d="M1.5 0V16" stroke="#888" stroke-width="2"/><path d="M2.5 1H10L12 3H17L14 8H11L9 6H2.5Z" fill="#f4f4f4" stroke="#888"/></svg>
<svg class="r" style="left:1144px;top:974px;" width="17" height="17" viewBox="0 0 17 17"><rect x="4.5" y="3.5" width="12" height="10" fill="#d8d8d8" stroke="#888"/><path d="M2 1V12M0 2H4" stroke="#666" stroke-width="1.5"/><rect x="8" y="14" width="6" height="2" fill="#888"/></svg>
<svg class="r" style="left:1168px;top:974px;" width="17" height="17" viewBox="0 0 17 17"><path d="M1 5H4L8 1V15L4 11H1Z" fill="#ddd" stroke="#888"/><circle cx="12" cy="11.5" r="4.5" fill="#e02828"/><path d="M10 9.5L14 13.5M14 9.5L10 13.5" stroke="#fff" stroke-width="1.5"/></svg>
<div class="t" style="left:1211.00px;top:969px;font-size:12px;line-height:12px;color:#000;letter-spacing:-0.405px;">16:59</div>
<div class="t" style="left:1196.50px;top:985px;font-size:12px;line-height:12px;color:#000;letter-spacing:-0.346px;">27.03.2018</div>
<svg class="r" style="left:1261px;top:977px;" width="16" height="13" viewBox="0 0 16 13"><defs><linearGradient id="gsd" x1="0" y1="0" x2="1" y2="1"><stop offset="0" stop-color="#3a7ad0"/><stop offset="1" stop-color="#5aa0f0"/></linearGradient></defs><rect x="0.5" y="0.5" width="15" height="12" fill="url(#gsd)" stroke="#a8c4e4"/><rect x="1" y="9" width="14" height="3" fill="#1a2a48"/><rect x="2" y="9.5" width="2" height="2" fill="#e8a020"/></svg>
</body></html>
